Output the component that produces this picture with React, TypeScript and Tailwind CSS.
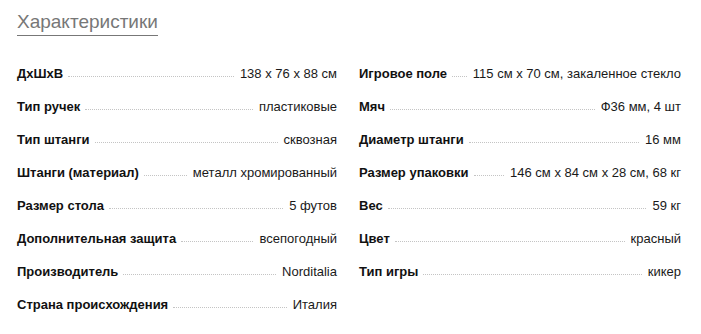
import React from "react";

const left: [string, string][] = [
  ["ДхШхВ", "138 x 76 x 88 см"],
  ["Тип ручек", "пластиковые"],
  ["Тип штанги", "сквозная"],
  ["Штанги (материал)", "металл хромированный"],
  ["Размер стола", "5 футов"],
  ["Дополнительная защита", "всепогодный"],
  ["Производитель", "Norditalia"],
  ["Страна происхождения", "Италия"],
];

const right: [string, string][] = [
  ["Игровое поле", "115 см x 70 см, закаленное стекло"],
  ["Мяч", "Ф36 мм, 4 шт"],
  ["Диаметр штанги", "16 мм"],
  ["Размер упаковки", "146 см x 84 см x 28 см, 68 кг"],
  ["Вес", "59 кг"],
  ["Цвет", "красный"],
  ["Тип игры", "кикер"],
];

function Row({ label, value }: { label: string; value: string }) {
  return (
    <div className="flex items-end h-[33px]">
      <span className="font-bold text-[#111] leading-[33px] whitespace-nowrap">{label}</span>
      <div className="flex-1 ml-[5px] mr-[6px] mb-[13px] border-b border-dotted border-[#c4c4c4]" />
      <span className="text-[#1a1a1a] leading-[33px] whitespace-nowrap">{value}</span>
    </div>
  );
}

export default function App() {
  return (
    <div
      className="bg-white w-[701px] h-[334px] pl-[17px] pr-[20px] text-[13px]"
      style={{ fontFamily: '"Liberation Sans", Arial, sans-serif' }}
    >
      <div className="pt-[10px]">
        <div className="inline-block text-[19px] leading-[23px] text-[#777] pb-[2px] border-b border-[#777]">
          Характеристики
        </div>
      </div>
      <div className="grid grid-cols-[320px_322px] gap-x-[22px] mt-[21px]">
        <div className="flex flex-col">
          {left.map(([l, v]) => (
            <Row key={l} label={l} value={v} />
          ))}
        </div>
        <div className="flex flex-col">
          {right.map(([l, v]) => (
            <Row key={l} label={l} value={v} />
          ))}
        </div>
      </div>
    </div>
  );
}
